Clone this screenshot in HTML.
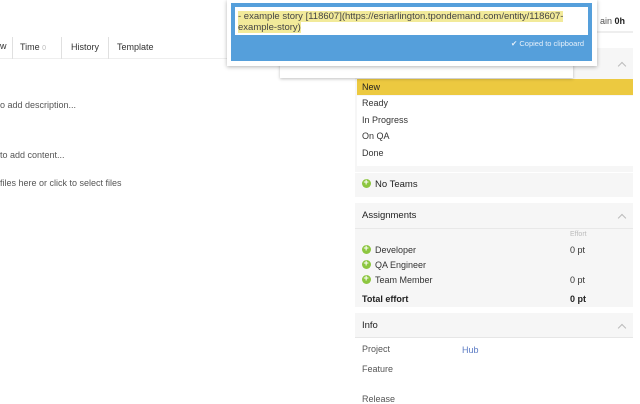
<!DOCTYPE html>
<html><head><style>
*{margin:0;padding:0;box-sizing:border-box}
body{width:640px;height:400px;overflow:hidden;background:#fff;font-family:"Liberation Sans",sans-serif;font-size:9px;color:#333;position:relative}
.a{position:absolute;white-space:nowrap}
.panel{position:absolute;left:355px;width:278px;background:#f6f6f6}
.hd{font-size:9.5px;color:#222}
.chev{position:absolute;width:6px;height:6px;border-left:1px solid #bbb;border-top:1px solid #bbb;transform:rotate(45deg)}
.ic{display:inline-block;width:9px;height:9px;border-radius:50%;background:#8cc63f;vertical-align:-1px;margin-right:4px;position:relative}
.ic:after{content:"+";position:absolute;left:1.5px;top:-2px;color:#fff;font-size:9px;font-weight:bold}
</style></head><body>
<div class="a" style="left:0;top:37px;width:355px;height:22px;border-bottom:1px solid #eee"></div>
<div class="a" style="left:0;top:41px">w</div>
<div class="a" style="left:12px;top:37px;height:22px;border-left:1px solid #e0e0e0"></div>
<div class="a" style="left:20px;top:42px">Time <span style="color:#bbb;font-size:7px">0</span></div>
<div class="a" style="left:61px;top:37px;height:22px;border-left:1px solid #e0e0e0"></div>
<div class="a" style="left:71px;top:42px">History</div>
<div class="a" style="left:108px;top:37px;height:22px;border-left:1px solid #e0e0e0"></div>
<div class="a" style="left:117px;top:42px">Template</div>
<div class="a" style="left:0;top:100px;color:#555">o add description...</div>
<div class="a" style="left:0;top:150px;color:#555">to add content...</div>
<div class="a" style="left:0;top:178px;color:#555">files here or click to select files</div>

<div class="a" style="left:600px;top:16px;font-size:9px;color:#555">ain <b style="color:#222">0h</b></div>
<div class="a" style="left:590px;top:31px;width:43px;height:2px;background:#eee"></div>

<div class="panel" style="top:48px;height:124px"></div>
<div class="a" style="left:357px;top:79px;width:276px;height:16px;background:#ecc940"></div>
<div class="a" style="left:362px;top:82px;color:#222">New</div>
<div class="a" style="left:357px;top:96px;width:276px;height:70px;background:#fff"></div>
<div class="a" style="left:362px;top:98px">Ready</div>
<div class="a" style="left:362px;top:115px">In Progress</div>
<div class="a" style="left:362px;top:131px">On QA</div>
<div class="a" style="left:362px;top:148px">Done</div>
<div class="chev" style="left:619px;top:63px"></div>

<div class="panel" style="top:173px;height:24px"></div>
<div class="a hd" style="left:362px;top:179px"><span class="ic"></span>No Teams</div>

<div class="panel" style="top:203px;height:104px"></div>
<div class="a" style="left:355px;top:228px;width:278px;height:1px;background:#e8e8e8"></div>
<div class="a hd" style="left:362px;top:210px">Assignments</div>
<div class="chev" style="left:619px;top:215px"></div>
<div class="a" style="left:570px;top:231px;color:#bbb;font-size:7px">Effort</div>
<div class="a" style="left:362px;top:245px"><span class="ic"></span>Developer</div>
<div class="a" style="left:570px;top:245px">0 pt</div>
<div class="a" style="left:362px;top:260px"><span class="ic"></span>QA Engineer</div>
<div class="a" style="left:362px;top:275px"><span class="ic"></span>Team Member</div>
<div class="a" style="left:570px;top:275px">0 pt</div>
<div class="a" style="left:362px;top:294px;font-weight:bold;color:#222">Total effort</div>
<div class="a" style="left:570px;top:294px;font-weight:bold;color:#222">0 pt</div>

<div class="panel" style="top:313px;height:87px;background:#fff"></div>
<div class="a" style="left:355px;top:313px;width:278px;height:25px;background:#f6f6f6;border-bottom:1px solid #e6e6e6"></div>
<div class="a hd" style="left:362px;top:320px">Info</div>
<div class="chev" style="left:619px;top:325px"></div>
<div class="a" style="left:362px;top:344px;color:#555">Project</div>
<div class="a" style="left:462px;top:345px;color:#5b7bc4">Hub</div>
<div class="a" style="left:362px;top:364px;color:#555">Feature</div>
<div class="a" style="left:362px;top:394px;color:#555">Release</div>

<div class="a" style="left:280px;top:52px;width:293px;height:26px;background:#fff;box-shadow:0 1px 3px rgba(0,0,0,.25)"></div>
<div class="a" style="left:227px;top:0;width:370px;height:66px;background:#fff;box-shadow:0 1px 4px rgba(0,0,0,.3)"></div>
<div class="a" style="left:231px;top:3px;width:361px;height:58px;background:#559fdb"></div>
<div class="a" style="left:235px;top:7px;width:353px;height:28px;background:#fff"></div>
<div class="a" style="left:238px;top:11px;width:346px;font-size:9.5px;line-height:11px;color:#444;white-space:normal"><span style="background:#f2ea9a">- example story [118607](https://esriarlington.tpondemand.com/entity/118607-example-story)</span></div>
<div class="a" style="left:511px;top:39px;color:#e6f0fa;font-size:7.5px">✔ Copied to clipboard</div>
</body></html>
